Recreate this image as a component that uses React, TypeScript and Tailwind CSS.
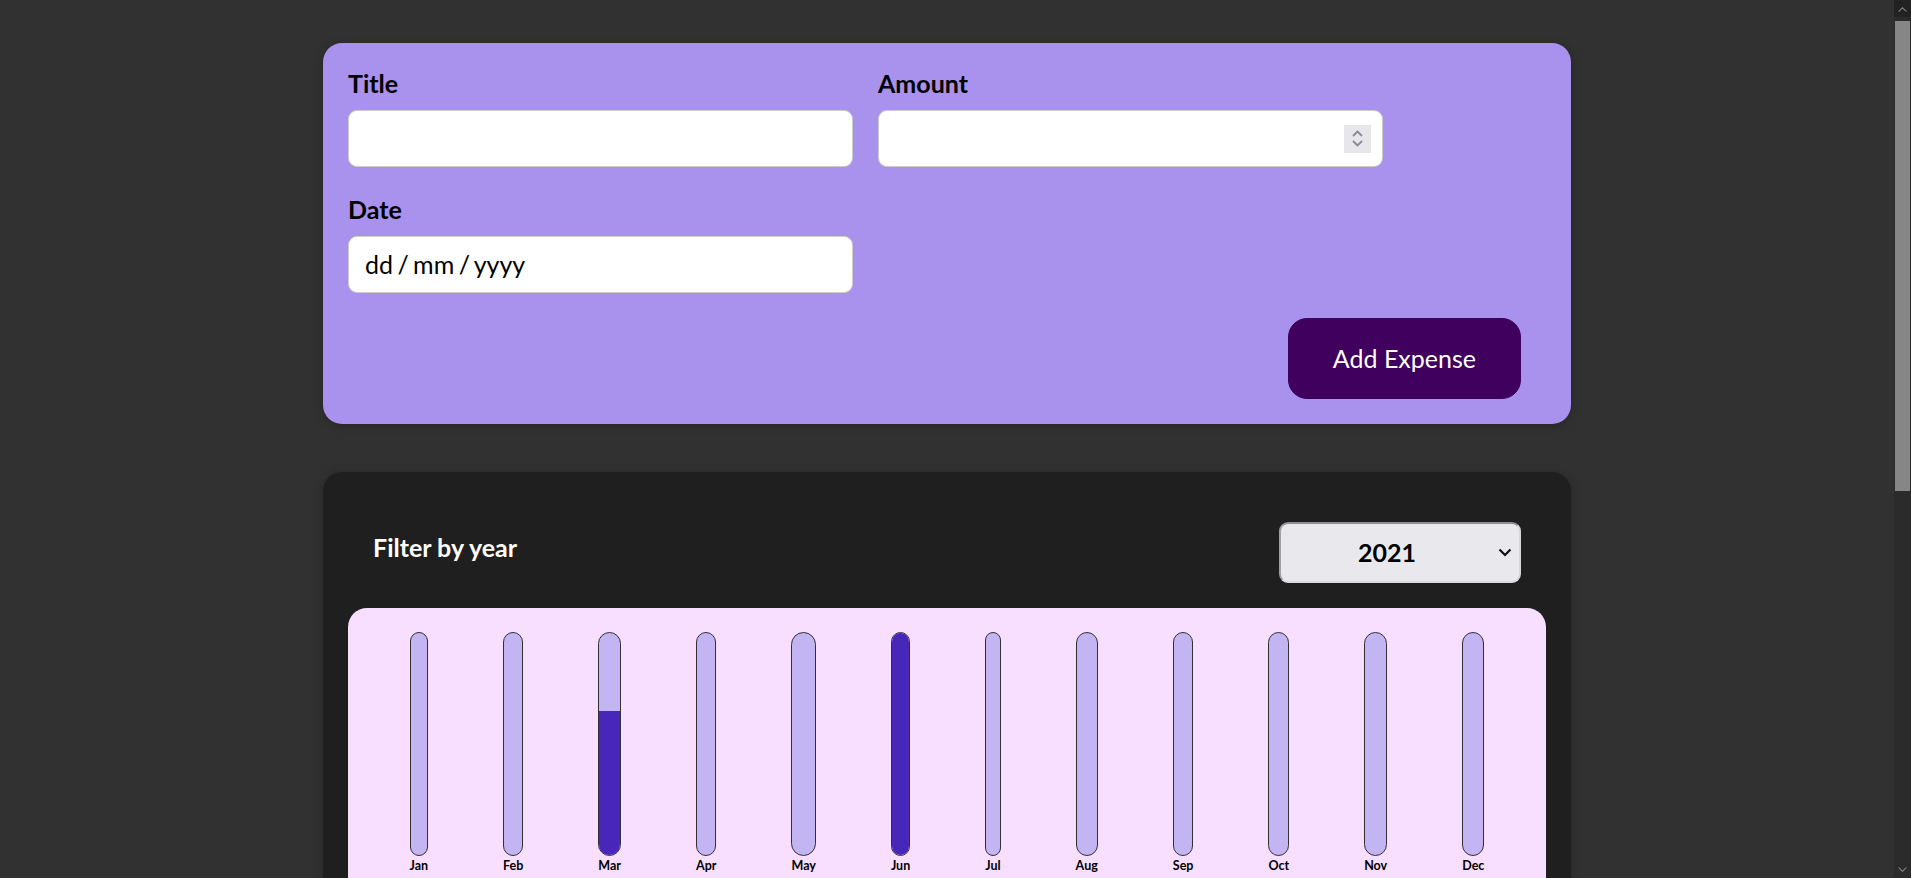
import { useState } from "react";

const MONTHS = [
  { label: "Jan", value: 0 },
  { label: "Feb", value: 0 },
  { label: "Mar", value: 0.65 },
  { label: "Apr", value: 0 },
  { label: "May", value: 0 },
  { label: "Jun", value: 1 },
  { label: "Jul", value: 0 },
  { label: "Aug", value: 0 },
  { label: "Sep", value: 0 },
  { label: "Oct", value: 0 },
  { label: "Nov", value: 0 },
  { label: "Dec", value: 0 },
];

function Control({ label, children }: { label: string; children: React.ReactNode }) {
  return (
    <div className="flex flex-col">
      <label className="block font-bold text-[25px] leading-[30px] mb-[12px] text-black">{label}</label>
      {children}
    </div>
  );
}

function NewExpense() {
  const [title, setTitle] = useState("");
  const [amount, setAmount] = useState("");
  return (
    <div className="w-[1248px] mx-auto mt-[43px] bg-[#a892ee] p-[25px] rounded-[19px] shadow-[0_1px_8px_rgba(0,0,0,0.25)]">
      <div className="flex flex-wrap gap-x-[25px] gap-y-[27px] mb-[25px] w-[1040px]">
        <Control label="Title">
          <input
            value={title}
            onChange={e => setTitle(e.target.value)}
            className="w-[505px] h-[57px] px-[13px] text-[25px] bg-white border border-[#cccccc] rounded-[9px] outline-none"
          />
        </Control>
        <Control label="Amount">
          <div className="w-[505px] h-[57px] flex items-center pl-[13px] pr-[11px] bg-white border border-[#cccccc] rounded-[9px]">
            <input
              value={amount}
              onChange={e => setAmount(e.target.value)}
              className="flex-1 min-w-0 text-[25px] outline-none bg-transparent"
            />
            <div className="w-[27px] h-[28px] bg-[#e6e6eb] flex flex-col items-center justify-center gap-[3px]">
              <svg width="11" height="7" viewBox="0 0 11 7" fill="none" stroke="#8a8a94" strokeWidth="1.8">
                <path d="M1 6L5.5 1.5L10 6" />
              </svg>
              <svg width="11" height="7" viewBox="0 0 11 7" fill="none" stroke="#8a8a94" strokeWidth="1.8">
                <path d="M1 1L5.5 5.5L10 1" />
              </svg>
            </div>
          </div>
        </Control>
        <Control label="Date">
          <div className="w-[505px] h-[57px] flex items-center pl-[16px] bg-white border border-[#cccccc] rounded-[9px] text-[25px] text-black [word-spacing:-2px]">
            dd / mm / yyyy
          </div>
        </Control>
      </div>
      <div className="flex justify-end">
        <button className="mr-[25px] px-[44px] py-[24px] bg-[#40005d] border border-[#40005d] rounded-[19px] text-white text-[25px] leading-[31px]">
          Add Expense
        </button>
      </div>
    </div>
  );
}

function Filter() {
  const [year, setYear] = useState("2021");
  return (
    <div className="px-[25px] text-white">
      <div className="flex items-center justify-between my-[25px]">
        <label className="font-bold text-[25px] leading-[30px] mb-[12px]">Filter by year</label>
        <div className="relative">
          <select
            value={year}
            onChange={e => setYear(e.target.value)}
            className="appearance-none w-[242px] h-[61px] pl-[77px] text-left font-bold text-[25px] text-black bg-[#e9e9ed] rounded-[9px] border-2 border-t-[#8f8f8f] border-l-[#a0a0a0] border-r-[#d6d6d6] border-b-[#dcdcdc] outline-none"
          >
            <option value="2022">2022</option>
            <option value="2021">2021</option>
            <option value="2020">2020</option>
            <option value="2019">2019</option>
          </select>
          <svg
            className="absolute right-[9px] top-[26px] pointer-events-none"
            width="14" height="9" viewBox="0 0 14 9" fill="none" stroke="#111" strokeWidth="2.2"
          >
            <path d="M1.5 1.5L7 7L12.5 1.5" />
          </svg>
        </div>
      </div>
    </div>
  );
}

function Chart() {
  return (
    <div className="h-[290px] p-[24px] rounded-[19px] bg-[#f8dfff] flex justify-around text-center">
      {MONTHS.map(m => (
        <div key={m.label} className="h-full flex flex-col items-center">
          <div className="flex-1 w-full border border-[#313131] rounded-[19px] bg-[#c3b4f3] overflow-hidden flex flex-col justify-end">
            <div className="w-full bg-[#4826b9]" style={{ height: `${m.value * 100}%` }} />
          </div>
          <div className="font-bold text-[12.5px] leading-[17px] text-black pt-[1px]">{m.label}</div>
        </div>
      ))}
    </div>
  );
}

function Scrollbar() {
  return (
    <div className="w-[17px] h-full flex flex-col bg-[#2b2b2b] shrink-0">
      <div className="h-[17px] flex items-center justify-center bg-[#222222]">
        <svg width="9" height="6" viewBox="0 0 9 6" fill="#8a8a8a">
          <path d="M0 5.5L4.5 1L9 5.5L7.6 5.5L4.5 2.6L1.4 5.5Z" />
        </svg>
      </div>
      <div className="h-[470px] bg-[#868686] mx-[1px] mt-[4px]" />
      <div className="flex-1" />
      <div className="h-[17px] flex items-center justify-center">
        <svg width="9" height="6" viewBox="0 0 9 6" fill="#8a8a8a">
          <path d="M0 0.5L4.5 5L9 0.5L7.6 0.5L4.5 3.4L1.4 0.5Z" />
        </svg>
      </div>
    </div>
  );
}

export default function App() {
  return (
    <div
      className="h-[878px] w-full flex overflow-hidden bg-[#313131]"
      style={{ fontFamily: "Lato, 'Noto Sans', sans-serif" }}
    >
      <div className="flex-1 h-full overflow-hidden">
        <NewExpense />
        <div className="w-[1248px] mx-auto mt-[48px] p-[25px] bg-[#1f1f1f] rounded-[19px] shadow-[0_1px_8px_rgba(0,0,0,0.25)]">
          <Filter />
          <Chart />
        </div>
      </div>
      <Scrollbar />
    </div>
  );
}
